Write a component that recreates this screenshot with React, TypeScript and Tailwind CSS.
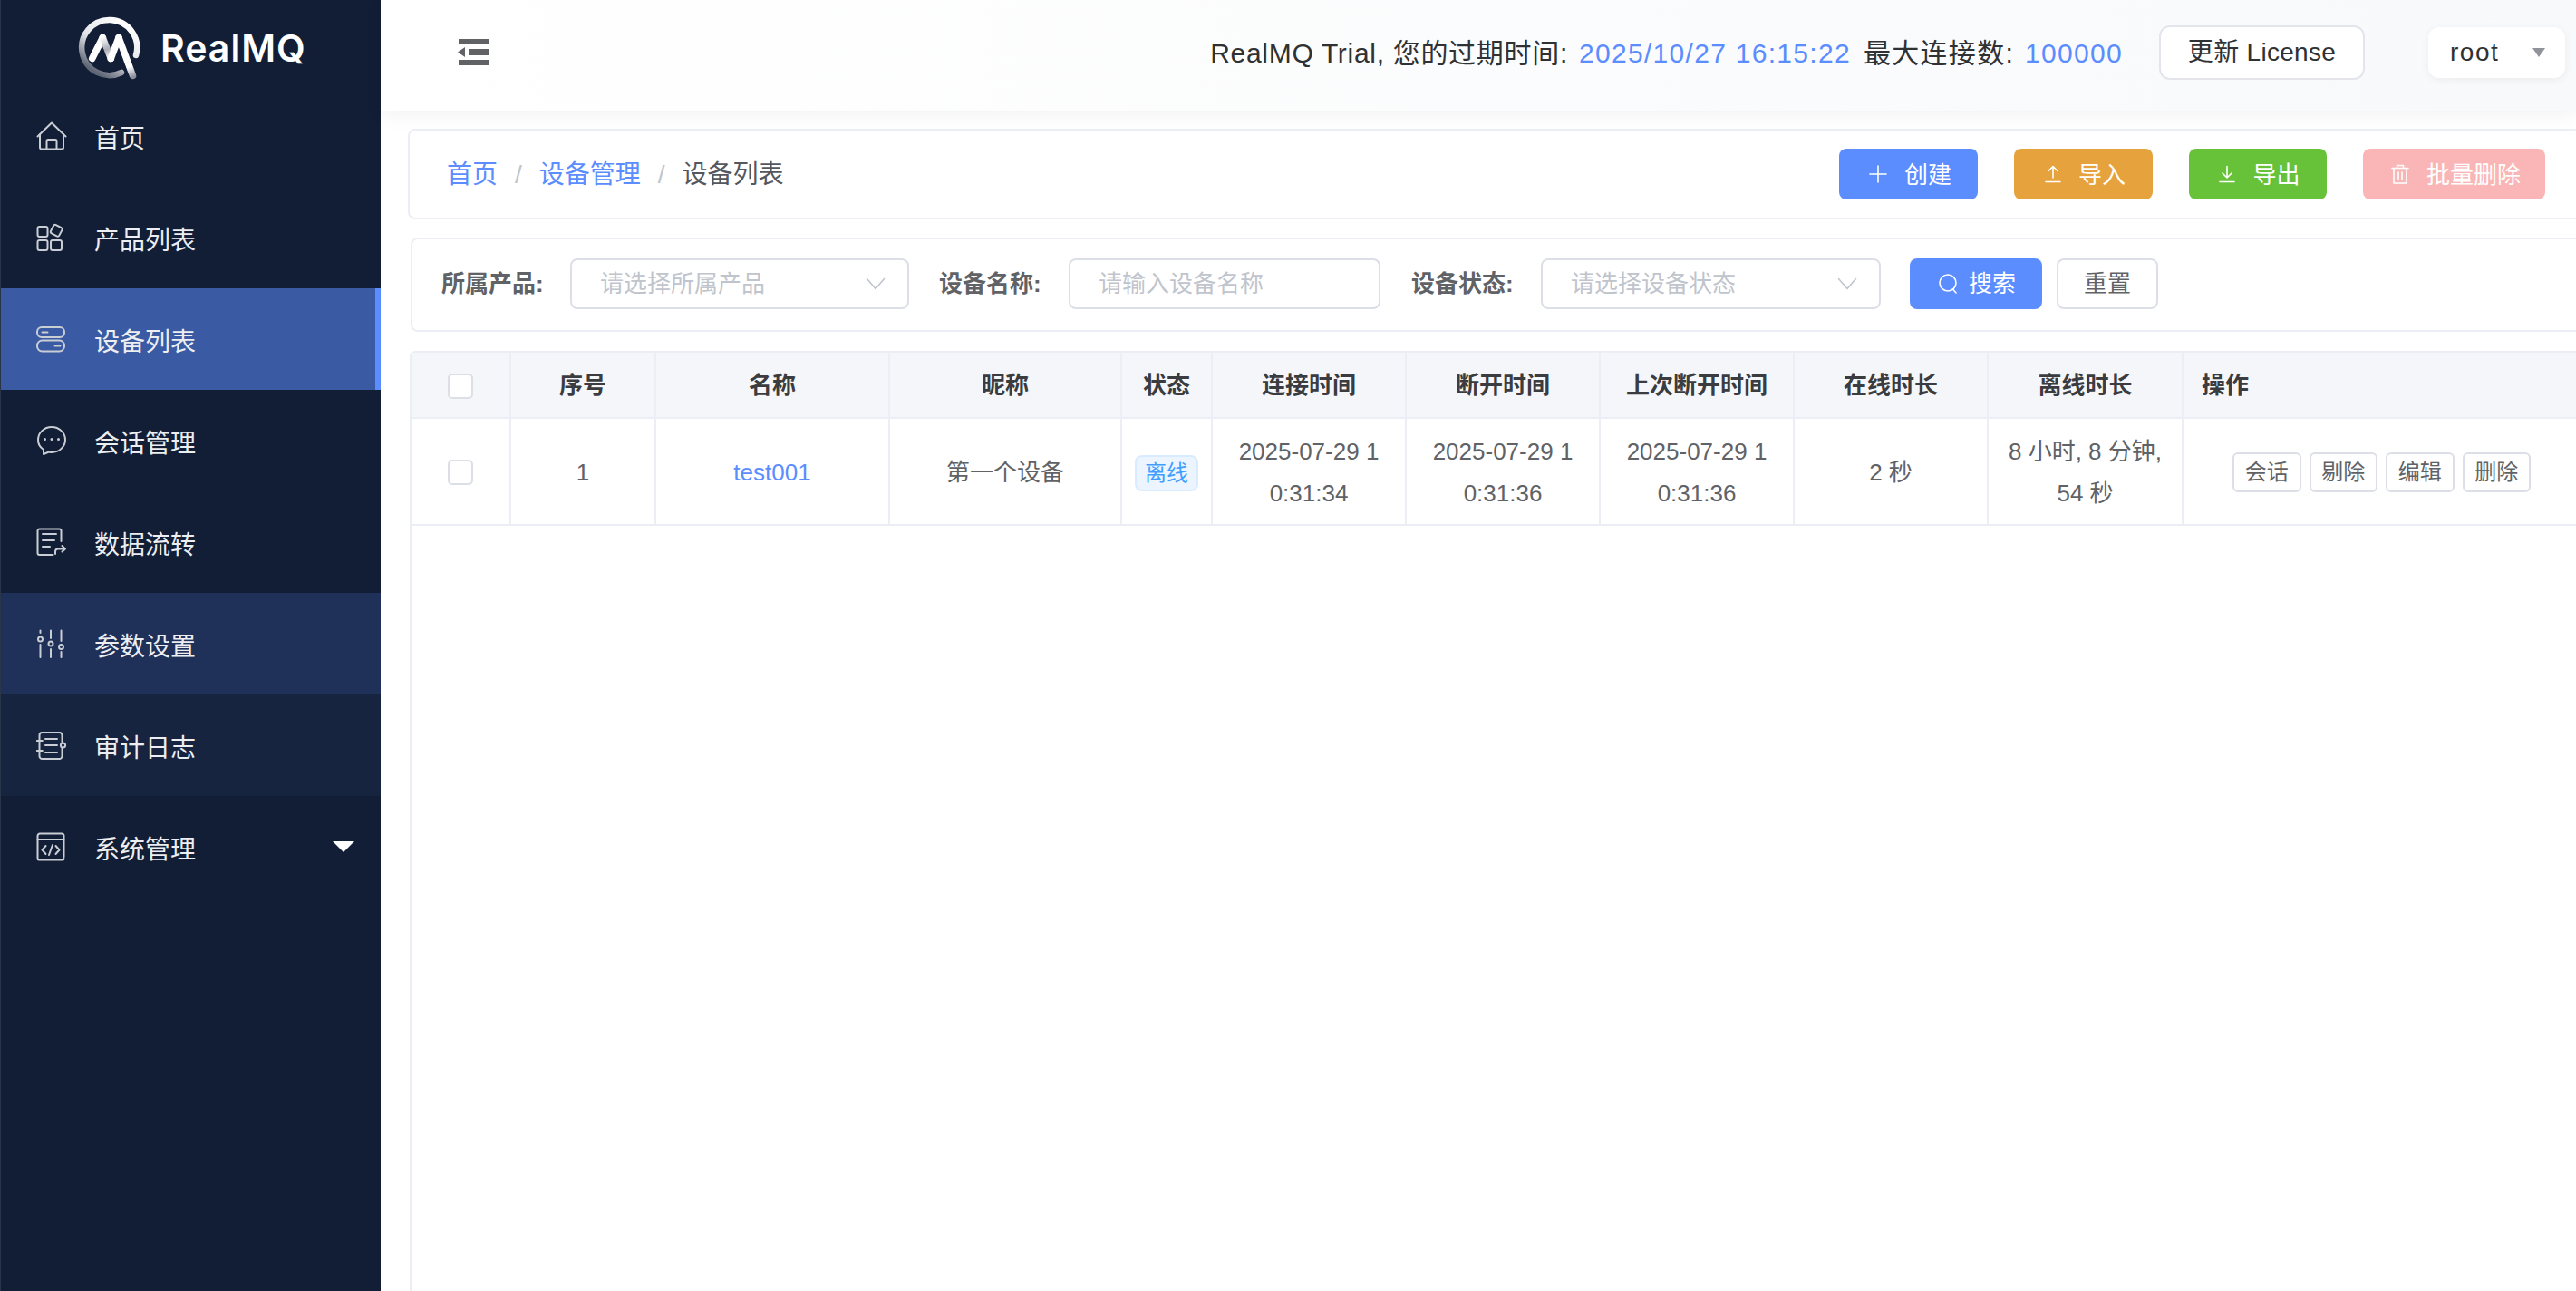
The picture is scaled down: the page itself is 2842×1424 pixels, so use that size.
import React from 'react';

const iconStroke = {
  fill: 'none',
  stroke: 'currentColor',
  strokeWidth: 2,
  strokeLinecap: 'round' as const,
  strokeLinejoin: 'round' as const,
};

const HomeIcon = () => (
  <svg width="34" height="32" viewBox="0 0 34 32" {...iconStroke}>
    <path d="M1.500 16.500 17 1.500l15.500 15" />
    <path d="M4 14v14.500a2 2 0 0 0 2 2h22a2 2 0 0 0 2-2V14" />
    <path d="M11.500 30V21.500a1.500 1.500 0 0 1 1.500-1.500h8a1.500 1.500 0 0 1 1.500 1.500V30" />
  </svg>
);

const ProductIcon = () => (
  <svg width="32" height="32" viewBox="0 0 32 32" {...iconStroke}>
    <rect x="1.500" y="4" width="11" height="11" rx="2" />
    <rect x="1.500" y="19" width="11" height="11" rx="2" />
    <rect x="16" y="19" width="12" height="11" rx="2" />
    <rect x="17" y="3" width="10.500" height="10.500" rx="2" transform="rotate(28 22.200 8.200)" />
  </svg>
);

const DeviceIcon = () => (
  <svg width="32" height="32" viewBox="0 0 32 32" {...iconStroke}>
    <rect x="1" y="3" width="30" height="11" rx="5" />
    <rect x="1" y="17.500" width="30" height="12" rx="5.500" />
    <path d="M6.500 8.500h6M20.500 23.500h6" />
  </svg>
);

const ChatIcon = () => (
  <svg width="34" height="34" viewBox="0 0 34 34" {...iconStroke}>
    <path d="M17 2C8.700 2 2 8.300 2 16c0 4.500 2.300 8.500 6 11v5l6-2.500c1 .2 2 .5 3 .5 8.300 0 15-6.300 15-14S25.300 2 17 2Z" />
    <circle cx="9.500" cy="15.500" r="1.500" fill="currentColor" stroke="none" />
    <circle cx="17" cy="15.500" r="1.500" fill="currentColor" stroke="none" />
    <circle cx="24.500" cy="15.500" r="1.500" fill="currentColor" stroke="none" />
  </svg>
);

const FlowIcon = () => (
  <svg width="34" height="32" viewBox="0 0 34 32" {...iconStroke}>
    <path d="M27.500 15V3.500a2 2 0 0 0-2-2H3.500a2 2 0 0 0-2 2V28a2 2 0 0 0 2 2h15" />
    <path d="M7 7h15M7 14h13M7 21h8" />
    <path d="M21 29v-2.500a3 3 0 0 1 3-3h8M28.500 20l3.500 3.500-3.500 3" />
  </svg>
);

const ParamsIcon = () => (
  <svg width="32" height="32" viewBox="0 0 32 32" {...iconStroke}>
    <path d="M4.500 1.500V4M4.500 17v14M16 1.500V10M16 22v9M27.500 1.500V13M27.500 25v6" />
    <circle cx="4.500" cy="11" r="2.500" />
    <circle cx="16" cy="16" r="2.500" />
    <circle cx="27.500" cy="19.500" r="2.500" />
  </svg>
);

const AuditIcon = () => (
  <svg width="34" height="32" viewBox="0 0 34 32" {...iconStroke}>
    <path d="M28.500 12.500V5a3 3 0 0 0-3-3h-19a3 3 0 0 0-3 3v23a3 3 0 0 0 3 3h19a3 3 0 0 0 3-3v-8.500" />
    <path d="M.8 11h6M.8 22h6M10 9h13M10 16h13M10 24h13" />
    <circle cx="29.500" cy="16" r="2.600" />
  </svg>
);

const SystemIcon = () => (
  <svg width="32" height="32" viewBox="0 0 32 32" {...iconStroke}>
    <path d="M30.500 27V4a2.500 2.500 0 0 0-2.500-2.500H4A2.500 2.500 0 0 0 1.500 4v25A1.500 1.500 0 0 0 3 30.500h26A1.500 1.500 0 0 0 30.500 29" />
    <path d="M1.500 8h29" />
    <path d="M10.500 15 6.500 19.500l4 4.500M21.500 15l4 4.500-4 4.500M18 14l-4 11" />
  </svg>
);

const Logo = () => (
  <svg width="72" height="72" viewBox="0 0 72 72" fill="none">
    <defs>
      <linearGradient id="ring" x1="55" y1="8" x2="20" y2="62" gradientUnits="userSpaceOnUse">
        <stop offset="0" stopColor="#ffffff" />
        <stop offset="0.55" stopColor="#e2e4e8" />
        <stop offset="1" stopColor="#5f6675" />
      </linearGradient>
      <linearGradient id="tail" x1="48" y1="30" x2="62" y2="68" gradientUnits="userSpaceOnUse">
        <stop offset="0" stopColor="#ffffff" />
        <stop offset="0.7" stopColor="#ffffff" />
        <stop offset="1" stopColor="#8b909b" />
      </linearGradient>
      <linearGradient id="valley" x1="28" y1="24" x2="37" y2="48" gradientUnits="userSpaceOnUse">
        <stop offset="0" stopColor="#ffffff" />
        <stop offset="0.55" stopColor="#a9adb5" />
        <stop offset="1" stopColor="#ffffff" />
      </linearGradient>
    </defs>
    <path d="M49 63A30.500 30.500 0 1 1 65 44" stroke="url(#ring)" strokeWidth="6.500" strokeLinecap="round" />
    <path d="M16.700 47.500 28.300 24.500" stroke="#ffffff" strokeWidth="7.500" strokeLinecap="round" />
    <path d="M28.300 24.500 37.300 47.500" stroke="url(#valley)" strokeWidth="7.500" strokeLinecap="round" />
    <path d="M37.300 47.500 46 24.500" stroke="#ffffff" strokeWidth="7.500" strokeLinecap="round" />
    <path d="M46 24.500 61.500 66.500" stroke="url(#tail)" strokeWidth="7.500" strokeLinecap="round" />
  </svg>
);

const menus = [
  { label: '首页', icon: <HomeIcon />, bg: '' },
  { label: '产品列表', icon: <ProductIcon />, bg: '' },
  { label: '设备列表', icon: <DeviceIcon />, bg: 'bg-[#3a5aa3] border-r-[6px] border-[#5b8dff]' },
  { label: '会话管理', icon: <ChatIcon />, bg: '' },
  { label: '数据流转', icon: <FlowIcon />, bg: '' },
  { label: '参数设置', icon: <ParamsIcon />, bg: 'bg-[#1f3059]' },
  { label: '审计日志', icon: <AuditIcon />, bg: 'bg-[#162440]' },
];

const Sidebar = () => (
  <aside className="w-[420px] shrink-0 bg-[#121e36] text-[#eceef1] border-l border-[#2b3549]">
    <div className="h-[94px] flex items-center pl-[84px] pt-[12px]">
      <Logo />
      <span className="ml-[20px] text-[41px] leading-none font-semibold text-white tracking-[1px] font-['Inter',sans-serif]">RealMQ</span>
    </div>
    <nav>
      {menus.map((m) => (
        <div key={m.label} className={`h-[112px] flex items-center ${m.bg}`}>
          <span className="w-[103px] pl-[39px] text-[#c9cdd4] flex">{m.icon}</span>
          <span className="text-[28px] pt-[8px]">{m.label}</span>
        </div>
      ))}
      <div className="h-[112px] flex items-center pr-[29px]">
        <span className="w-[103px] pl-[39px] text-[#c9cdd4] flex"><SystemIcon /></span>
        <span className="text-[28px] pt-[8px]">系统管理</span>
        <span className="ml-auto w-0 h-0 border-x-[12px] border-x-transparent border-t-[12px] border-t-white" />
      </div>
    </nav>
  </aside>
);

const TopBar = () => (
  <header className="h-[122px] shrink-0 relative z-10 flex items-center pl-[85px] pr-[12px] pb-[6px] bg-linear-to-r from-white to-[#f8f9fb] shadow-[0_6px_20px_rgba(0,0,0,0.05)]">
    <svg width="36" height="30" viewBox="0 0 36 30" fill="#606266">
      <rect x="1" y="0" width="34" height="6" />
      <rect x="12" y="11" width="23" height="7" />
      <rect x="1" y="23" width="34" height="6" />
      <path d="M0 14.500 8 9v11Z" />
    </svg>
    <div className="ml-auto flex items-center text-[30px] tracking-[1.300px] text-[#303133]">
      <span className="tracking-[0.700px]">RealMQ Trial, 您的过期时间:</span>
      <span className="ml-[12px] text-[#5b8dff]">2025/10/27 16:15:22</span>
      <span className="ml-[14px]">最大连接数:</span>
      <span className="ml-[12px] text-[#5b8dff]">100000</span>
      <button className="ml-[40px] w-[227px] h-[60px] rounded-[12px] border-2 border-[#e3e5ea] bg-white text-[28px] tracking-[0.300px]">更新 License</button>
      <div className="ml-[70px] w-[151px] h-[56px] rounded-[12px] bg-white shadow-[0_2px_10px_rgba(0,0,0,0.06)] flex items-center pl-[24px] pr-[22px] text-[28px] tracking-[1.500px]">
        root
        <span className="ml-auto w-0 h-0 border-x-[7px] border-x-transparent border-t-[10px] border-t-[#909399]" />
      </div>
    </div>
  </header>
);

const ActionButton = ({ icon, label, className }: { icon: React.ReactNode; label: string; className: string }) => (
  <button className={`h-[56px] rounded-[8px] flex items-center justify-center gap-[19px] pl-[4px] text-[26px] text-white ${className}`}>
    {icon}
    <span className="pt-[2px]">{label}</span>
  </button>
);

const thinIcon = { fill: 'none', stroke: 'currentColor', strokeWidth: 1.6, strokeLinecap: 'round' as const, strokeLinejoin: 'round' as const };

const Breadcrumb = () => (
  <div className="ml-[30px] mt-[20px] h-[100px] shrink-0 rounded-l-[8px] border-2 border-r-0 border-[#ebeef5] bg-white flex items-center pl-[41px] pr-[34px] text-[28px]">
    <span className="pt-[2px] text-[#5b8dff]">首页</span>
    <span className="pt-[2px] mx-[19px] text-[#c0c4cc]">/</span>
    <span className="pt-[2px] text-[#5b8dff]">设备管理</span>
    <span className="pt-[2px] mx-[19px] text-[#c0c4cc]">/</span>
    <span className="pt-[2px] text-[#54575d]">设备列表</span>
    <div className="ml-auto flex gap-[40px]">
      <ActionButton
        className="w-[153px] bg-[#5b8dff]"
        label="创建"
        icon={<svg width="20" height="20" viewBox="0 0 20 20" {...thinIcon}><path d="M10 1v18M1 10h18" /></svg>}
      />
      <ActionButton
        className="w-[153px] bg-[#e6a23c]"
        label="导入"
        icon={<svg width="18" height="20" viewBox="0 0 18 20" {...thinIcon}><path d="M9 14V1.500M4 6.500l5-5 5 5M1 18.500h16" /></svg>}
      />
      <ActionButton
        className="w-[152px] bg-[#67c23a]"
        label="导出"
        icon={<svg width="18" height="20" viewBox="0 0 18 20" {...thinIcon}><path d="M9 1.500V14M4 9l5 5 5-5M1 18.500h16" /></svg>}
      />
      <ActionButton
        className="w-[201px] bg-[#fab6b6]"
        label="批量删除"
        icon={<svg width="20" height="22" viewBox="0 0 20 22" {...thinIcon}><path d="M1 4.500h18M6.500 4.500V1.500h7v3M3 4.500V21h14V4.500M8 9v8M12 9v8" /></svg>}
      />
    </div>
  </div>
);

const Chevron = () => (
  <svg width="22" height="14" viewBox="0 0 22 14" fill="none" stroke="#c0c4cc" strokeWidth="1.600" strokeLinecap="round" strokeLinejoin="round">
    <path d="M1.500 1.500 11 12.500l9.500-11" />
  </svg>
);

const FieldBox = ({ placeholder, className, arrow }: { placeholder: string; className: string; arrow?: boolean }) => (
  <div className={`h-[56px] rounded-[8px] border-2 border-[#dcdfe6] flex items-center justify-between pl-[31px] pr-[24px] text-[#c0c4cc] ${className}`}>
    <span>{placeholder}</span>
    {arrow && <Chevron />}
  </div>
);

const FilterBar = () => (
  <div className="ml-[33px] mt-[20px] h-[104px] shrink-0 rounded-l-[8px] border-2 border-r-0 border-[#ebeef5] bg-white flex items-start pt-[21px] pl-[32px] text-[26px]">
    <label className="h-[56px] flex items-center font-semibold text-[#606266] w-[142px]">所属产品:</label>
    <FieldBox placeholder="请选择所属产品" className="w-[374px]" arrow />
    <label className="ml-[33px] h-[56px] flex items-center font-semibold text-[#606266] w-[143px]">设备名称:</label>
    <FieldBox placeholder="请输入设备名称" className="w-[344px]" />
    <label className="ml-[34px] h-[56px] flex items-center font-semibold text-[#606266] w-[143px]">设备状态:</label>
    <FieldBox placeholder="请选择设备状态" className="w-[375px]" arrow />
    <button className="ml-[32px] w-[146px] h-[56px] rounded-[8px] bg-[#5b8dff] text-white flex items-center justify-center gap-[12px] pl-[3px]">
      <svg width="21" height="22" viewBox="0 0 21 22" {...thinIcon}><circle cx="10" cy="10" r="9" /><path d="m15.500 17 3.500 4" /></svg>
      搜索
    </button>
    <button className="ml-[16px] w-[112px] h-[56px] rounded-[8px] border-2 border-[#dcdfe6] text-[#606266]">重置</button>
  </div>
);

const Checkbox = () => (
  <span className="mx-auto block w-[28px] h-[28px] rounded-[5px] border-2 border-[#dcdfe6] bg-white" />
);

const columns = ['序号', '名称', '昵称', '状态', '连接时间', '断开时间', '上次断开时间', '在线时长', '离线时长'];
const thClass = 'border-r-2 border-b-2 border-[#ebeef5] bg-[#f5f6fa] font-semibold text-[#3a3c40] text-center pt-[2px]';
const tdClass = 'border-r-2 border-b-2 border-[#ebeef5] text-center leading-[46px] pt-[2px]';

const DeviceTable = () => (
  <div className="ml-[32px] mt-[21px] flex-1 rounded-tl-[6px] border-t-2 border-l-2 border-[#ebeef5] bg-white">
    <table className="w-full table-fixed border-separate border-spacing-0 text-[26px] text-[#606266]">
      <colgroup>
        <col className="w-[110px]" />
        <col className="w-[160px]" />
        <col className="w-[258px]" />
        <col className="w-[256px]" />
        <col className="w-[100px]" />
        <col className="w-[214px]" />
        <col className="w-[214px]" />
        <col className="w-[214px]" />
        <col className="w-[214px]" />
        <col className="w-[215px]" />
        <col />
      </colgroup>
      <thead>
        <tr className="h-[73px]">
          <th className={thClass}><Checkbox /></th>
          {columns.map((c) => (
            <th key={c} className={thClass}>{c}</th>
          ))}
          <th className="border-b-2 border-[#ebeef5] bg-[#f5f6fa] font-semibold text-[#3a3c40] text-left pl-[20px] pt-[2px]">操作</th>
        </tr>
      </thead>
      <tbody>
        <tr className="h-[118px]">
          <td className={tdClass}><Checkbox /></td>
          <td className={tdClass}>1</td>
          <td className={tdClass}><span className="text-[#5b8dff]">test001</span></td>
          <td className={tdClass}>第一个设备</td>
          <td className={tdClass}>
            <span className="inline-block w-[70px] h-[40px] leading-[36px] rounded-[8px] border-2 border-[#d9ecff] bg-[#ecf5ff] text-[#409eff] text-[24px]">离线</span>
          </td>
          <td className={tdClass}>2025-07-29 1<br />0:31:34</td>
          <td className={tdClass}>2025-07-29 1<br />0:31:36</td>
          <td className={tdClass}>2025-07-29 1<br />0:31:36</td>
          <td className={tdClass}>2 秒</td>
          <td className={tdClass}>8 小时, 8 分钟,<br />54 秒</td>
          <td className="border-b-2 border-[#ebeef5] pl-[54px] pt-[2px]">
            <div className="flex gap-[9px]">
              {['会话', '剔除', '编辑', '删除'].map((a) => (
                <button key={a} className="w-[75.500px] h-[44px] rounded-[6px] border-2 border-[#dcdfe6] bg-white text-[24px] text-[#606266]">{a}</button>
              ))}
            </div>
          </td>
        </tr>
      </tbody>
    </table>
  </div>
);

export default function App() {
  return (
    <div className="h-[1424px] w-[2842px] flex overflow-hidden bg-white font-['Liberation_Sans','Noto_Sans_CJK_SC',sans-serif]">
      <Sidebar />
      <main className="flex-1 min-w-0 flex flex-col">
        <TopBar />
        <Breadcrumb />
        <FilterBar />
        <DeviceTable />
      </main>
    </div>
  );
}
